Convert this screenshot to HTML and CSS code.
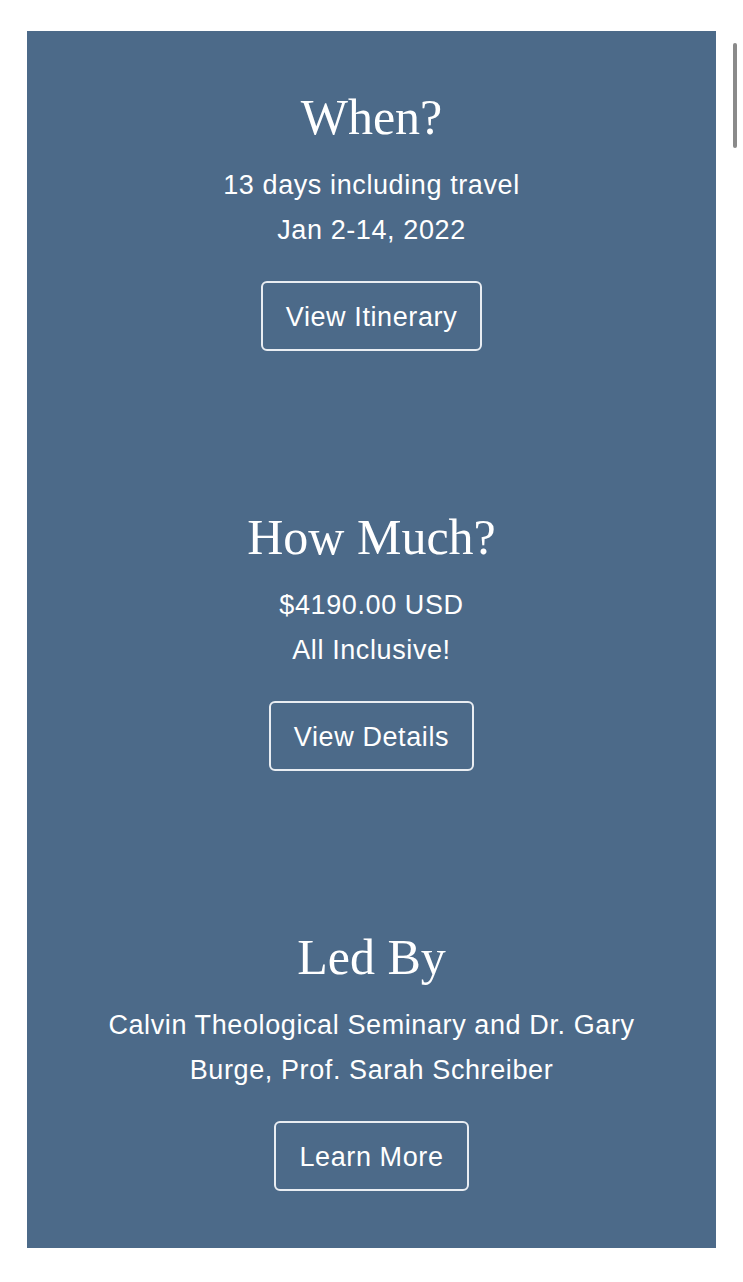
FILE: index.html
```html
<!DOCTYPE html>
<html lang="en">
<head>
<meta charset="utf-8">
<title>Trip Overview</title>
<link rel="stylesheet" href="styles.css">
</head>
<body>
<main class="page">
  <div class="panel">
    <section class="info">
      <h2 class="info-title">When?</h2>
      <div class="info-text">
        <p>13 days including travel</p>
        <p>Jan 2-14, 2022</p>
      </div>
      <a class="btn" href="#">View Itinerary</a>
    </section>
    <section class="info">
      <h2 class="info-title">How Much?</h2>
      <div class="info-text">
        <p>$4190.00 USD</p>
        <p>All Inclusive!</p>
      </div>
      <a class="btn" href="#">View Details</a>
    </section>
    <section class="info">
      <h2 class="info-title">Led By</h2>
      <div class="info-text">
        <p>Calvin Theological Seminary and Dr. Gary Burge, Prof. Sarah Schreiber</p>
      </div>
      <a class="btn" href="#">Learn More</a>
    </section>
  </div>
</main>
<div class="scrollbar"></div>
</body>
</html>
```
FILE: styles.css
```css
html, body {
  margin: 0;
  padding: 0;
  background: #ffffff;
}

.page {
  padding: 31px 27px 34px;
}

.panel {
  background: #4c6a89;
  padding: 56px 40px 57px;
  display: flex;
  flex-direction: column;
  gap: 156px;
  color: #ffffff;
  text-align: center;
}

.info {
  display: flex;
  flex-direction: column;
  align-items: center;
}

.info-title {
  margin: 0;
  font-family: "Liberation Serif", "Times New Roman", serif;
  font-weight: normal;
  font-size: 50px;
  line-height: 60px;
}

.info-text {
  margin-top: 16px;
  font-family: "Liberation Sans", Arial, sans-serif;
  font-size: 27px;
  letter-spacing: 0.6px;
  line-height: 45px;
}

.info-text p {
  margin: 0;
}

.btn {
  margin-top: 28px;
  display: inline-block;
  padding: 18px 23px 15px;
  border: 2px solid #e9edf2;
  border-radius: 6px;
  color: #ffffff;
  text-decoration: none;
  font-family: "Liberation Sans", Arial, sans-serif;
  font-size: 27px;
  letter-spacing: 0.6px;
  line-height: 33px;
}

.scrollbar {
  position: fixed;
  top: 43px;
  right: 6px;
  width: 4px;
  height: 105px;
  border-radius: 2px;
  background: #8a8a8a;
}
```
